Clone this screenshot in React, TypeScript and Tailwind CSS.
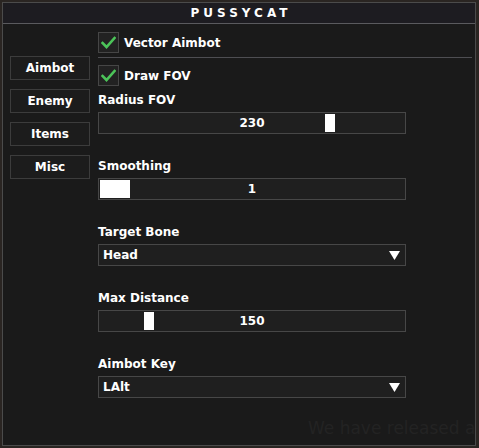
import { ReactNode } from "react";

const font = { fontFamily: '"DejaVu Sans", Verdana, sans-serif' };

const tabs = ["Aimbot", "Enemy", "Items", "Misc"];

// slider track is 306px inside the border; grab size follows the value range
function grabFor(value: number, min: number, max: number, grab: number) {
  const usable = 306 - 2 - grab;
  return Math.round(((value - min) / (max - min)) * usable) + 1;
}

function Check({ label }: { label: string }) {
  return (
    <div className="flex items-center gap-[5px]">
      <div className="flex h-[21px] w-[21px] items-center justify-center border border-[#464646] bg-[#222222]">
        <svg width="15" height="13" viewBox="0 0 15 13">
          <path
            d="M1.5 7 L5.5 11 L13.5 2"
            fill="none"
            stroke="#4cc459"
            strokeWidth="2.6"
            strokeLinecap="square"
          />
        </svg>
      </div>
      <span className="text-[12px] font-bold text-white">{label}</span>
    </div>
  );
}

function Label({ children, className }: { children: ReactNode; className?: string }) {
  return (
    <div className={`text-[12px] font-bold leading-[15px] text-white ${className ?? ""}`}>
      {children}
    </div>
  );
}

function Slider({
  value,
  min,
  max,
  grab,
}: {
  value: number;
  min: number;
  max: number;
  grab: number;
}) {
  return (
    <div className="relative mt-[4px] flex h-[22px] w-[308px] items-center justify-center border border-[#474747] bg-[#1f1f1f]">
      <div
        className="absolute top-[1px] bottom-[1px] bg-white"
        style={{ left: grabFor(value, min, max, grab), width: grab }}
      />
      <span className="relative text-[12px] font-bold text-white">{value}</span>
    </div>
  );
}

function Combo({ value }: { value: string }) {
  return (
    <div className="mt-[4px] flex h-[22px] w-[308px] items-center justify-between border border-[#474747] bg-[#1f1f1f] pl-[4px] pr-[5px]">
      <span className="text-[12px] font-bold text-white">{value}</span>
      <svg width="11" height="9" viewBox="0 0 11 9">
        <path d="M0 0 H11 L5.5 9 Z" fill="#ffffff" />
      </svg>
    </div>
  );
}

export default function App() {
  return (
    <div
      className="h-[448px] w-[479px] overflow-hidden bg-[#2a2522] p-[2px] pr-[3px]"
      style={font}
    >
      <div className="relative flex h-[444px] w-[474px] flex-col overflow-hidden border border-[#4b4b4b] bg-[#1a1a1a]">
        <div className="flex h-[21px] items-center justify-center border-b border-[#5a5a5e] bg-[#1d1c21]">
          <span className="pl-[4px] text-[12px] font-bold tracking-[4px] text-white">
            PUSSYCAT
          </span>
        </div>

        <div className="flex flex-1">
          <div className="flex w-[95px] flex-col gap-[9px] pl-[7px] pt-[32px]">
            {tabs.map((t) => (
              <div
                key={t}
                className="flex h-[24px] w-[80px] items-center justify-center border border-[#3c3c3c] bg-[#1c1c1c] text-[12px] font-bold text-white"
              >
                {t}
              </div>
            ))}
          </div>

          <div className="flex flex-1 flex-col pr-[3px] pt-[8px]">
            <Check label="Vector Aimbot" />
            <div className="mt-[4px] h-px w-full bg-[#4e4e52]" />
            <div className="mt-[7px]">
              <Check label="Draw FOV" />
            </div>

            <Label className="mt-[7px]">Radius FOV</Label>
            <Slider value={230} min={0} max={300} grab={10} />

            <Label className="mt-[25px]">Smoothing</Label>
            <Slider value={1} min={1} max={10} grab={30} />

            <Label className="mt-[25px]">Target Bone</Label>
            <Combo value="Head" />

            <Label className="mt-[25px]">Max Distance</Label>
            <Slider value={150} min={0} max={1000} grab={10} />

            <Label className="mt-[25px]">Aimbot Key</Label>
            <Combo value="LAlt" />
          </div>
        </div>

        <div className="pointer-events-none absolute left-[305px] top-[413px] whitespace-nowrap text-[17px] text-[#232323]">
          We have released a
        </div>
      </div>
    </div>
  );
}
